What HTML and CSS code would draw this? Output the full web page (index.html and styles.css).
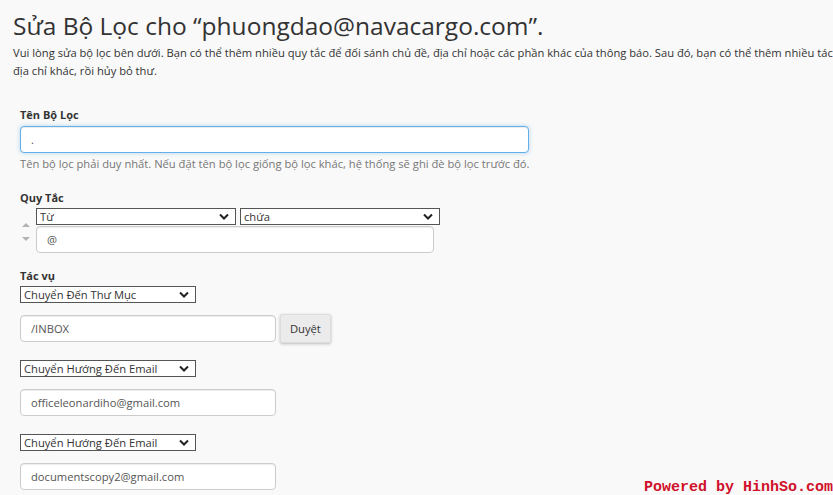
FILE: index.html
```html
<!DOCTYPE html>
<html lang="vi">
  <head>
    <meta charset="UTF-8" />
    <meta name="viewport" content="width=device-width, initial-scale=1.0" />
    <title>Sửa Bộ Lọc</title>
    <link rel="stylesheet" href="styles.css">
  </head>

  <body>
    <div class="page">
      <h1>Sửa Bộ Lọc cho “phuongdao@navacargo.com”.</h1>
      <p class="intro">
        Vui lòng sửa bộ lọc bên dưới. Bạn có thể thêm nhiều quy tắc để đối sánh chủ đề, địa chỉ hoặc các phần khác của thông báo. Sau đó, bạn có thể thêm nhiều tác vụ để chuyển thư đến<br />
        địa chỉ khác, rồi hủy bỏ thư.
      </p>

      <form class="filter-form">
        <div class="group">
          <label class="group-label" for="filter-name">Tên Bộ Lọc</label>
          <input type="text" id="filter-name" class="field field-focus field-wide" value="." />
          <span class="help">Tên bộ lọc phải duy nhất. Nếu đặt tên bộ lọc giống bộ lọc khác, hệ thống sẽ ghi đè bộ lọc trước đó.</span>
        </div>

        <div class="group">
          <span class="group-label group-label-tight">Quy Tắc</span>
          <div class="rule">
            <div class="rule-arrows">
              <span class="arrow arrow-up"></span>
              <span class="arrow arrow-down"></span>
            </div>
            <div class="rule-fields">
              <div class="rule-selects">
                <select class="pick pick-rule">
                  <option>Từ</option>
                </select>
                <select class="pick pick-rule">
                  <option>chứa</option>
                </select>
              </div>
              <input type="text" class="field field-rule" value="@" />
            </div>
          </div>
        </div>

        <div class="group">
          <span class="group-label group-label-tight">Tác vụ</span>
          <div class="action">
            <select class="pick pick-action">
              <option>Chuyển Đến Thư Mục</option>
            </select>
            <div class="action-row">
              <input type="text" class="field field-action" value="/INBOX" />
              <button type="button" class="btn">Duyệt</button>
            </div>
          </div>
          <div class="action">
            <select class="pick pick-action">
              <option>Chuyển Hướng Đến Email</option>
            </select>
            <div class="action-row">
              <input type="text" class="field field-action" value="officeleonardiho@gmail.com" />
            </div>
          </div>
          <div class="action">
            <select class="pick pick-action">
              <option>Chuyển Hướng Đến Email</option>
            </select>
            <div class="action-row">
              <input type="text" class="field field-action" value="documentscopy2@gmail.com" />
            </div>
          </div>
        </div>
      </form>
    </div>

    <div class="watermark">Powered by HinhSo.com</div>
  </body>
</html>
```

FILE: styles.css
```css
html {
  overflow: hidden;
}

body {
  font-family: "Open Sans", sans-serif;
  background-color: #f9f9f9;
  color: #333;
  margin: 0;
  padding: 0;
}

.page {
  width: 1100px;
  padding: 10px 13px;
}

h1 {
  font-size: 24.5px;
  font-weight: 400;
  line-height: 32px;
  margin: 0 0 2px;
}

.intro {
  font-size: 11.2px;
  line-height: 18px;
  white-space: nowrap;
  margin: 0 0 27px;
}

.filter-form {
  padding-left: 7px;
}

.group {
  margin-bottom: 15px;
}

.group-label {
  display: block;
  font-size: 11px;
  font-weight: 700;
  line-height: 16px;
  margin-bottom: 3px;
}

.group-label-tight {
  margin-bottom: 2px;
}

.field {
  box-sizing: border-box;
  height: 27px;
  padding: 4px 10px;
  font-family: "Open Sans", sans-serif;
  font-size: 11.2px;
  color: #555;
  background-color: #fff;
  border: 1px solid #ccc;
  border-radius: 4px;
  box-shadow: inset 0 1px 1px rgba(0, 0, 0, 0.075);
  outline: none;
}

.field-focus {
  border-color: #66afe9;
  box-shadow: inset 0 1px 1px rgba(0, 0, 0, 0.075), 0 0 4px rgba(102, 175, 233, 0.5);
}

.field-wide {
  display: block;
  width: 509px;
}

.help {
  display: block;
  font-size: 11.2px;
  line-height: 16px;
  color: #777;
  margin: 3px 0 18px;
}

.pick {
  appearance: none;
  box-sizing: border-box;
  height: 17px;
  padding: 0 20px 0 3px;
  font-family: "Open Sans", sans-serif;
  font-size: 11.2px;
  color: #333;
  background: #fff url("data:image/svg+xml;utf8,<svg xmlns='http://www.w3.org/2000/svg' width='10' height='7' viewBox='0 0 10 7'><path d='M1 1.5 L5 5.5 L9 1.5' fill='none' stroke='%23222' stroke-width='2'/></svg>") no-repeat right 6px center;
  border: 1px solid #555;
  border-radius: 0;
}

.rule {
  display: flex;
}

.rule-arrows {
  width: 16px;
  display: flex;
  flex-direction: column;
  align-items: flex-start;
  gap: 10px;
  padding: 15px 0 0 2px;
  box-sizing: border-box;
}

.arrow {
  width: 0;
  height: 0;
  border-left: 4px solid transparent;
  border-right: 4px solid transparent;
}

.arrow-up {
  border-bottom: 4px solid #b3b3b3;
}

.arrow-down {
  border-top: 4px solid #b3b3b3;
}

.rule-selects {
  display: flex;
  gap: 4px;
}

.pick-rule {
  width: 200px;
}

.field-rule {
  display: block;
  width: 398px;
  margin-top: 1px;
}

.action {
  margin-bottom: 18px;
}

.pick-action {
  display: block;
  width: 176px;
}

.action-row {
  display: flex;
  align-items: center;
  gap: 4px;
  height: 27px;
  margin-top: 12px;
}

.field-action {
  width: 256px;
}

.btn {
  flex-shrink: 0;
  height: 29px;
  padding: 0 9px;
  font-family: "Open Sans", sans-serif;
  font-size: 11.2px;
  color: #333;
  background-color: #ebebeb;
  border: 1px solid #ddd;
  border-radius: 2px;
  box-shadow: 0 1px 3px rgba(0, 0, 0, 0.25);
  cursor: pointer;
}

.watermark {
  position: absolute;
  right: 0;
  bottom: 0;
  font-family: "Liberation Mono", monospace;
  font-size: 15px;
  font-weight: 700;
  line-height: 15px;
  color: #d0102a;
}
```
